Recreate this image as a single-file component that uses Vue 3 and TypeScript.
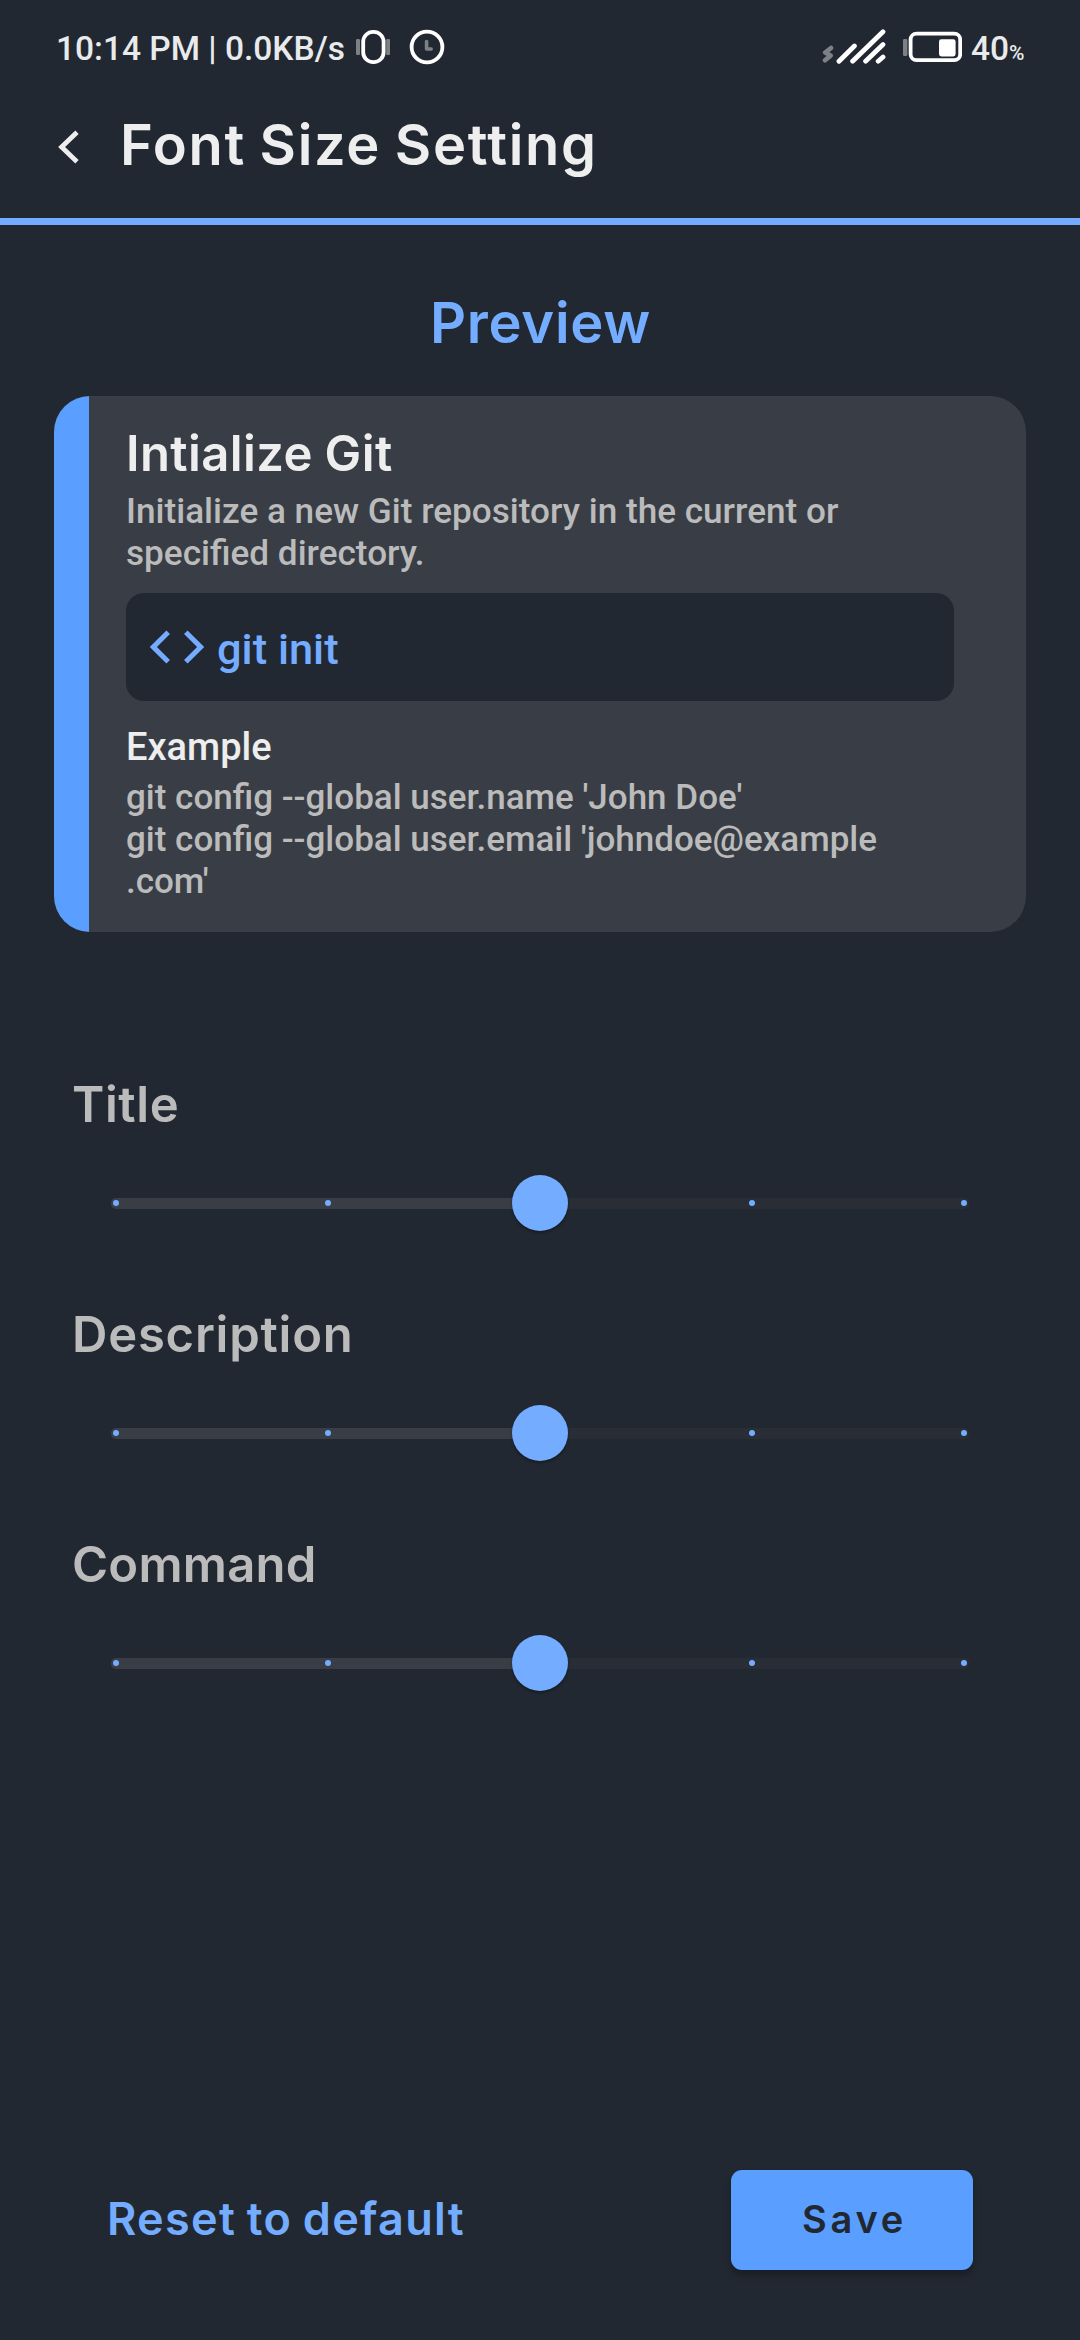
<script setup lang="ts">
import { ref } from 'vue'

interface Setting {
  label: string
  spacing: number
  value: number
}

const steps = [0, 1, 2, 3, 4]

const settings = ref<Setting[]>([
  { label: 'Title', spacing: 0.6, value: 2 },
  { label: 'Description', spacing: 0.77, value: 2 },
  { label: 'Command', spacing: 0.25, value: 2 },
])

const example = [
  "git config --global user.name 'John Doe'",
  "git config --global user.email 'johndoe@example",
  ".com'",
]

// The first and last stops sit 5px inside the ends of the 858px track.
const stopX = (step: number): string => `${5 + step * 212}px`

const reset = (): void => {
  settings.value.forEach((s) => (s.value = 2))
}
</script>

<template>
  <div class="screen">
    <div class="status">
      <span class="clock-text">10:14 PM | 0.0KB/s</span>
      <svg class="vibrate" width="34" height="36" viewBox="0 0 34 36" fill="none">
        <rect x="0" y="10" width="4" height="16" rx="1.2" fill="#7c8087" />
        <rect x="30.2" y="10" width="4" height="16" rx="1.2" fill="#7c8087" />
        <rect x="7.2" y="2.8" width="20.4" height="30.4" rx="10" stroke="#fff" stroke-width="3.8" />
      </svg>
      <svg class="alarm" width="36" height="36" viewBox="0 0 36 36" fill="none">
        <circle cx="18" cy="18" r="15.4" stroke="#fff" stroke-width="3.8" />
        <path d="M17.6 12.6V20H22.2" stroke="#7c8087" stroke-width="3.6" stroke-linecap="round" stroke-linejoin="round" />
      </svg>
      <span class="grow"></span>
      <svg width="64" height="36" viewBox="0 0 64 36" fill="none" stroke-linecap="round">
        <path d="M9 19L3.2 23.6L8.6 26.6L3 31.2" stroke="#7c8087" stroke-width="4.6" stroke-linejoin="round" />
        <path d="M17 32.2L32.4 17M30.6 32.2L61 2.8M43.6 32.2L61 15.6M56.2 32.2L61 28" stroke="#fff" stroke-width="4.8" />
      </svg>
      <svg class="battery" width="60" height="36" viewBox="0 0 60 36" fill="none">
        <rect x="1" y="10" width="4.4" height="17" rx="1.2" fill="#7c8087" />
        <rect x="8.6" y="4.6" width="49.6" height="26.6" rx="6" stroke="#fff" stroke-width="3.8" />
        <rect x="37" y="10.2" width="16.6" height="17.2" rx="2.4" fill="#fff" />
      </svg>
      <span class="level">40</span><span class="percent">%</span>
    </div>

    <header class="header">
      <svg class="back" width="22" height="34" viewBox="0 0 22 34" fill="none">
        <path d="M19 2.2L3.6 17L19 31.8" stroke="#eee" stroke-width="4.8" />
      </svg>
      <h1>Font Size Setting</h1>
    </header>

    <h2 class="preview">Preview</h2>

    <section class="card">
      <div class="accent"></div>
      <div class="body">
        <h3>Intialize Git</h3>
        <p class="text desc">Initialize a new Git repository in the current or<br />specified directory.</p>
        <div class="command">
          <svg width="54" height="34" viewBox="0 0 54 34" fill="none" stroke="#74acff" stroke-width="5">
            <path d="M18.2 2.2L3.4 17L18.2 31.8M35.8 2.2L50.6 17L35.8 31.8" />
          </svg>
          <span>git init</span>
        </div>
        <h4>Example</h4>
        <p class="text ex"><span v-for="line in example" :key="line">{{ line }}</span></p>
      </div>
    </section>

    <main class="settings">
      <section v-for="s in settings" :key="s.label" class="setting">
        <label :style="{ letterSpacing: s.spacing + 'px' }">{{ s.label }}</label>
        <div class="slider">
          <div class="track">
            <div class="active" :style="{ width: stopX(s.value) }"></div>
          </div>
          <i v-for="n in steps" :key="n" class="stop" :style="{ left: stopX(n) }" @click="s.value = n"></i>
          <i class="thumb" :style="{ left: stopX(s.value) }"></i>
        </div>
      </section>
    </main>

    <footer class="footer">
      <button class="reset" @click="reset">Reset to default</button>
      <button class="save">Save</button>
    </footer>
  </div>
</template>

<style>
body {
  background: #222831;
}
</style>

<style scoped>
.screen {
  display: flex;
  flex-direction: column;
  box-sizing: border-box;
  width: 1080px;
  height: 2340px;
  padding-bottom: 70px;
  overflow: hidden;
  background: #222831;
  color: #eee;
  font-family: Roboto, sans-serif;
}
svg {
  display: block;
  flex: none;
}
h1, h2, h3, h4, p {
  margin: 0;
}
h1, h2, h3, label, .reset, .save {
  font-family: Inter, sans-serif;
  font-weight: 600;
  white-space: nowrap;
}
.status {
  display: flex;
  align-items: center;
  height: 94px;
  padding: 0 56px;
  color: #e9eaec;
  font-size: 33.5px;
  font-weight: 500;
  line-height: 40px;
  white-space: nowrap;
}
.clock-text {
  width: 300px;
  padding-top: 3px;
}
.alarm {
  margin-left: 19px;
}
.grow {
  flex: 1;
}
.battery {
  margin-left: 16px;
}
.level {
  width: 38px;
  margin-left: 9px;
  padding-top: 3px;
}
.percent {
  width: 15px;
  padding-top: 11px;
  font-size: 21px;
}
.header {
  display: flex;
  align-items: center;
  height: 102px;
  padding: 0 58px 22px;
  border-bottom: 7px solid #74acff;
}
.back {
  margin-top: 4px;
}
h1 {
  margin-left: 40px;
  font-size: 56px;
  letter-spacing: 1.65px;
  line-height: 66px;
  word-spacing: -2px;
}
.preview {
  margin: 65px 0 40px;
  padding-left: 1px;
  color: #74acff;
  font-size: 56px;
  letter-spacing: 0.7px;
  line-height: 66px;
  text-align: center;
}
.card {
  display: flex;
  flex: none;
  height: 536px;
  margin: 0 54px;
  overflow: hidden;
  border-radius: 36px;
  background: #393e46;
}
.accent {
  width: 35px;
  background: #5a9eff;
}
.body {
  width: 828px;
  padding: 30px 0 0 37px;
}
h3 {
  font-size: 49px;
  letter-spacing: 0.4px;
  line-height: 56px;
  word-spacing: -1px;
}
.text {
  color: #bbb;
  font-size: 35.15px;
  font-weight: 500;
  line-height: 42px;
  white-space: nowrap;
}
.desc {
  margin-top: 8px;
}
.command {
  display: flex;
  align-items: center;
  height: 108px;
  margin-top: 19px;
  padding-left: 24px;
  box-sizing: border-box;
  border-radius: 18px;
  background: #222831;
  color: #74acff;
  font-size: 43.4px;
  font-weight: 500;
  line-height: 52px;
}
.command span {
  margin-left: 13px;
  padding-top: 5px;
}
h4 {
  margin-top: 23px;
  font-size: 38px;
  font-weight: 500;
  line-height: 46px;
}
.ex {
  margin-top: 7px;
  font-size: 35px;
}
.ex span {
  display: block;
}
.settings {
  margin-top: 143px;
}
.setting {
  height: 230px;
}
label {
  display: block;
  padding-left: 72px;
  color: #bbb;
  font-size: 49px;
  line-height: 60px;
}
.slider {
  position: relative;
  display: flex;
  align-items: center;
  height: 56px;
  margin: 40px 111px 0;
}
.track {
  width: 100%;
  height: 11px;
  overflow: hidden;
  border-radius: 5px;
  background: #292d36;
}
.active {
  height: 100%;
  background: #393e46;
}
.stop {
  position: absolute;
  top: 25px;
  width: 6px;
  height: 6px;
  margin-left: -3px;
  border-radius: 50%;
  background: #74acff;
}
.thumb {
  position: absolute;
  top: 0;
  width: 56px;
  height: 56px;
  margin-left: -28px;
  border-radius: 50%;
  background: #74acff;
  box-shadow: 0 2px 3px rgba(0, 0, 0, 0.3);
}
.footer {
  display: flex;
  align-items: center;
  justify-content: space-between;
  height: 100px;
  margin-top: auto;
  padding: 0 107px;
}
button {
  border: 0;
}
.reset {
  padding: 0 0 2px;
  background: none;
  color: #74acff;
  font-size: 45px;
  letter-spacing: 1.3px;
  line-height: 54px;
  word-spacing: -2px;
}
.save {
  width: 242px;
  height: 100px;
  padding: 0 0 3px 5px;
  border-radius: 11px;
  background: #5a9eff;
  box-shadow: 0 5px 7px rgba(0, 0, 0, 0.28);
  color: #222831;
  font-size: 38px;
  letter-spacing: 3.7px;
  line-height: 46px;
}
</style>
